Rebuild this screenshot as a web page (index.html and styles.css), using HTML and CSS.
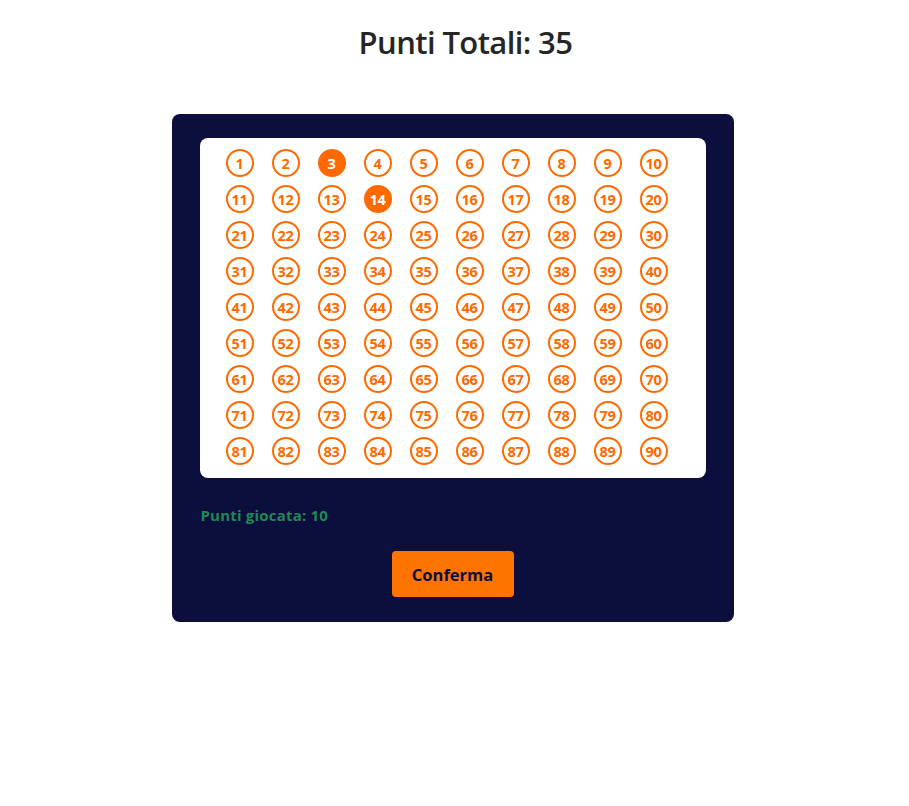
FILE: index.html
```html
<!DOCTYPE html>
<html lang="it">
<head>
<meta charset="utf-8">
<title>Punti</title>
<link rel="stylesheet" href="styles.css">
</head>
<body>
<h1 class="title">Punti Totali: 35</h1>
<div class="panel">
  <div class="board" id="board"></div>
  <p class="points">Punti giocata: 10</p>
  <div class="actions"><button class="confirm">Conferma</button></div>
</div>
<script>
var b = document.getElementById('board');
for (var i = 1; i <= 90; i++) {
  var s = document.createElement('span');
  s.className = 'num' + ((i === 3 || i === 14) ? ' selected' : '');
  s.textContent = i;
  b.appendChild(s);
}
</script>
</body>
</html>
```
FILE: styles.css
```css
body {
  margin: 0;
  font-family: "Open Sans", "Noto Sans", sans-serif;
  background: #fff;
}
.title {
  margin: 22px 0 0;
  text-align: center;
  font-size: 31px;
  font-weight: 600;
  color: #262626;
  line-height: 40px;
  padding-left: 22px;
  letter-spacing: -0.6px;
}
.panel {
  width: 562px;
  margin: 52px 0 0 calc(50% - 283px);
  background: #0c0e3d;
  border-radius: 8px;
  padding: 24px 28px 25px;
  box-sizing: border-box;
}
.board {
  background: #fff;
  border-radius: 8px;
  padding: 7px 16px 9px 17px;
  display: flex;
  flex-wrap: wrap;
}
.num {
  width: 28px;
  height: 28px;
  margin: 4px 9px;
  box-sizing: border-box;
  border: 2px solid #ff6a00;
  border-radius: 50%;
  color: #ff6a00;
  font-weight: 700;
  font-size: 14.5px;
  display: flex;
  align-items: center;
  justify-content: center;
  letter-spacing: -0.3px;
}
.num.selected {
  background: #ff6a00;
  color: #fff;
}
.points {
  margin: 28px 0 0;
  color: #1d8a52;
  font-weight: 700;
  font-size: 15px;
  line-height: 18px;
  padding-left: 1px;
  letter-spacing: 0.2px;
}
.actions {
  display: flex;
  justify-content: center;
  margin-top: 27px;
}
.confirm {
  width: 122px;
  height: 46px;
  background: #ff7300;
  border: none;
  border-radius: 4px;
  font-family: inherit;
  font-weight: 700;
  font-size: 16.5px;
  color: #0c0e3d;
}
```
